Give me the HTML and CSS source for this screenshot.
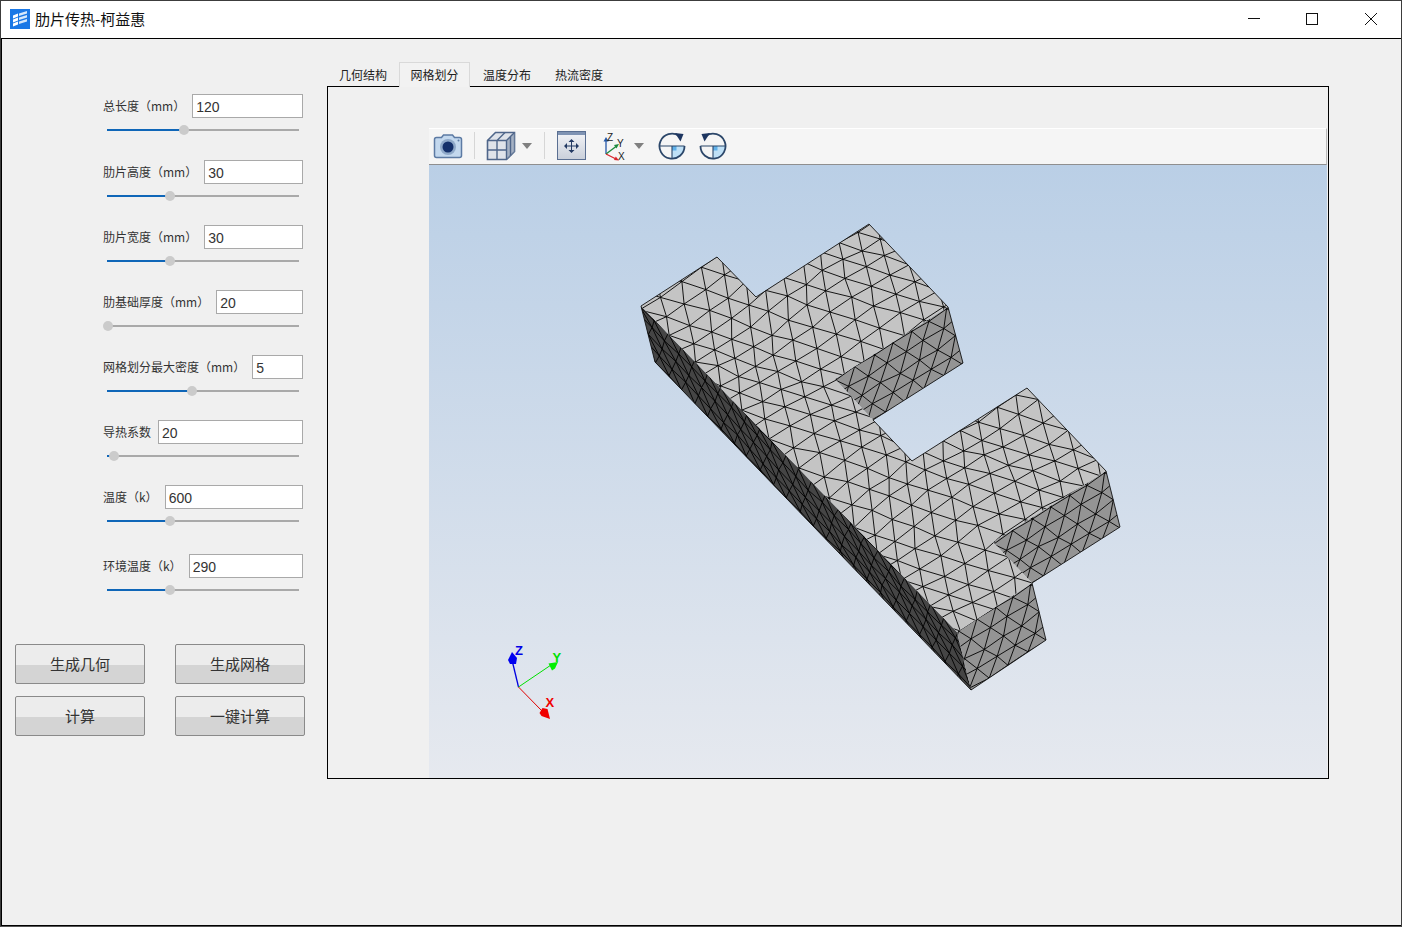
FILE: index.html
```html
<!DOCTYPE html>
<html lang="zh">
<head>
<meta charset="utf-8">
<title>肋片传热-柯益惠</title>
<link rel="stylesheet" href="styles.css">
</head>
<body>
<div class="window">
  <header class="titlebar">
    <svg class="app-icon" viewBox="0 0 20 20">
      <rect width="20" height="20" fill="#1a78e6"/>
      <path d="M3 6.500l5-2v3l-5 2zM3 10.500l5-2v3l-5 2zM3 14.500l5-2v3l-5 2z" fill="#fff"/>
      <path d="M9 4.500l8-2.500v2.500l-8 2.500zM9 8.500l8-2.500v2.500l-8 2.500zM9 12.500l8-2.500v2.500l-8 2.500z" fill="#d6e8fb"/>
    </svg>
    <span class="app-title">肋片传热-柯益惠</span>
    <div class="win-buttons">
      <button class="win-btn" aria-label="最小化"><svg viewBox="0 0 14 14" width="14" height="14"><path d="M1 6.500h12" stroke="#111" fill="none"/></svg></button>
      <button class="win-btn" aria-label="最大化"><svg viewBox="0 0 14 14" width="14" height="14"><rect x="1.500" y="1.500" width="11" height="11" stroke="#111" fill="none"/></svg></button>
      <button class="win-btn" aria-label="关闭"><svg viewBox="0 0 14 14" width="14" height="14"><path d="M1 1l12 12M13 1L1 13" stroke="#111" fill="none"/></svg></button>
    </div>
  </header>

  <main class="content">
    <aside class="controls">
      <form class="form">
        <div class="field field-first">
          <div class="row"><label>总长度（mm）</label><input value="120"></div>
          <div class="slider"><span class="fill" style="width:40%"></span></div>
        </div>
        <div class="field">
          <div class="row"><label>肋片高度（mm）</label><input value="30"></div>
          <div class="slider"><span class="fill" style="width:33%"></span></div>
        </div>
        <div class="field">
          <div class="row"><label>肋片宽度（mm）</label><input value="30"></div>
          <div class="slider"><span class="fill" style="width:33%"></span></div>
        </div>
        <div class="field">
          <div class="row"><label>肋基础厚度（mm）</label><input value="20"></div>
          <div class="slider"><span class="fill" style="width:0.500%"></span></div>
        </div>
        <div class="field">
          <div class="row"><label>网格划分最大密度（mm）</label><input value="5"></div>
          <div class="slider"><span class="fill" style="width:44.500%"></span></div>
        </div>
        <div class="field">
          <div class="row"><label>导热系数</label><input value="20"></div>
          <div class="slider"><span class="fill" style="width:3.600%"></span></div>
        </div>
        <div class="field field-wide">
          <div class="row"><label>温度（k）</label><input value="600"></div>
          <div class="slider"><span class="fill" style="width:33%"></span></div>
        </div>
        <div class="field field-last">
          <div class="row"><label>环境温度（k）</label><input value="290"></div>
          <div class="slider"><span class="fill" style="width:33%"></span></div>
        </div>
      </form>
      <div class="actions">
        <button class="action">生成几何</button>
        <button class="action">生成网格</button>
        <button class="action">计算</button>
        <button class="action">一键计算</button>
      </div>
    </aside>

    <section class="workspace">
      <nav class="tabs">
        <span class="tab">几何结构</span>
        <span class="tab tab-active">网格划分</span>
        <span class="tab">温度分布</span>
        <span class="tab">热流密度</span>
      </nav>
      <div class="panel">
        <div class="viewer">
          <div class="toolbar">
            <svg class="ti ti-camera" viewBox="0 0 30 26" width="30" height="26">
              <path d="M1.500 6.500q0-2 2-2h5l2-2.500h9l2 2.500h5q2 0 2 2v16q0 2-2 2h-23q-2 0-2-2z" fill="#c3d8ee" stroke="#5c7aa3" stroke-width="1.500"/>
              <circle cx="15" cy="14" r="8" fill="#8fa9c9"/>
              <circle cx="15" cy="14" r="5.500" fill="#14306b"/>
              <circle cx="25.500" cy="7.500" r="1" fill="#5c7aa3"/>
            </svg>
            <span class="sep sep-a"></span>
            <svg class="ti ti-cube" viewBox="0 0 30 30" width="30" height="30">
              <path d="M1.500 9.500l8-8h19v19l-8 8h-19z" fill="#dfe3ea" stroke="#4f668a" stroke-width="1.600"/>
              <path d="M20.500 9.500l8-8v19l-8 8z" fill="#8d9db4" fill-opacity=".7"/>
              <path d="M1.500 9.500h19v19M20.500 9.500l8-8M11 9.500v19M1.500 19h19M11 9.500l8-8M24.500 5.500v19" fill="none" stroke="#4f668a" stroke-width="1.400"/>
            </svg>
            <span class="caret caret-a"></span>
            <span class="sep sep-b"></span>
            <svg class="ti ti-fit" viewBox="0 0 30 30" width="30" height="30">
              <defs><linearGradient id="fitg" x1="0" y1="0" x2="0" y2="1"><stop offset="0" stop-color="#f4f5f8"/><stop offset="1" stop-color="#c9cfda"/></linearGradient></defs>
              <rect x=".500" y=".500" width="28" height="28" fill="url(#fitg)" stroke="#5a6f92"/>
              <rect x="1" y="1" width="27" height="3" fill="#7f93b3"/>
              <path d="M14.500 10v10M9.500 15h10" stroke="#233a63"/>
              <path d="M14.500 8l-3 3h6zM14.500 22l-3-3h6zM7 15l3-3v6zM22 15l-3-3v6z" fill="#233a63"/>
            </svg>
            <svg class="ti ti-axes" viewBox="0 0 26 30" width="26" height="30">
              <path d="M4 23V9" stroke="#2456a8" stroke-width="1.300"/><path d="M4 6l-2.500 4.500h5z" fill="#2456a8"/>
              <path d="M4 23L14 15.500" stroke="#1c8a3c" stroke-width="1.300"/><path d="M17 13l-5 1 2.500 3.500z" fill="#1c8a3c"/>
              <path d="M4 23l10 5" stroke="#d8262c" stroke-width="1.300"/><path d="M17 29.500l-5-.5 1.800-3.500z" fill="#d8262c"/>
              <text x="5" y="9.500" class="axis-text">Z</text>
              <text x="15" y="16" class="axis-text">Y</text>
              <text x="16" y="29" class="axis-text">X</text>
            </svg>
            <span class="caret caret-b"></span>
            <svg class="ti ti-cw" viewBox="0 0 28 28" width="28" height="28">
              <path d="M14 14h12.500A12.500 12.500 0 0 1 14 26.500z" fill="#bfe0f6"/>
              <rect x="14" y="14" width="4.500" height="4.500" fill="#5fb0e8"/>
              <path d="M14 14v12.500M1.500 14h25" stroke="#2b4669" fill="none" stroke-width="1.100"/>
              <path d="M21 3.800A12.500 12.500 0 1 0 26.500 14" fill="none" stroke="#2b4669" stroke-width="1.800"/>
              <path d="M17 1l8.500 1-3 7.500z" fill="#1d3560"/>
            </svg>
            <svg class="ti ti-ccw" viewBox="0 0 28 28" width="28" height="28">
              <path d="M14 14h12.500A12.500 12.500 0 0 1 14 26.500z" fill="#bfe0f6"/>
              <rect x="14" y="14" width="4.500" height="4.500" fill="#5fb0e8"/>
              <path d="M14 14v12.500M1.500 14h25" stroke="#2b4669" fill="none" stroke-width="1.100"/>
              <path d="M7 3.800A12.500 12.500 0 1 1 1.500 14" fill="none" stroke="#2b4669" stroke-width="1.800"/>
              <path d="M11 1l-8.500 1 3 7.500z" fill="#1d3560"/>
            </svg>
          </div>
          <div class="canvas">
            <svg id="scene" class="scene" viewBox="429 165 898 613" width="898" height="613">
              <g class="triad">
                <path d="M518.500 687L512 660" stroke="#0000e0" stroke-width="1.300"/>
                <path d="M512 652l-4 8 2 4h6l1-6z" fill="#0000f0"/>
                <path d="M518.500 687L551 665" stroke="#00e000"/>
                <path d="M558 662l-9.500 1.500 3.500 7 3-2z" fill="#00f000"/>
                <path d="M518.500 687L542 711" stroke="#e00000"/>
                <path d="M550 719l-2.500-10-5-1-3 5 2 3z" fill="#f00000"/>
                <text x="515" y="655" class="t-z">Z</text>
                <text x="552.500" y="662" class="t-y">Y</text>
                <text x="545.500" y="707" class="t-x">X</text>
              </g>
            </svg>
          </div>
        </div>
      </div>
    </section>
  </main>
</div>
<script src="mesh.js"></script>
</body>
</html>
```

FILE: styles.css
```css
* { box-sizing: border-box; }
html, body { margin: 0; padding: 0; }
body {
  width: 1402px;
  height: 927px;
  overflow: hidden;
  font-family: "Noto Sans CJK SC", "Liberation Sans", sans-serif;
  color: #222;
}
.window {
  width: 1402px;
  height: 927px;
  display: flex;
  flex-direction: column;
  border: 1px solid #3c3c3c;
  border-bottom-color: #555;
  background: #fff;
}
.titlebar {
  height: 38px;
  flex: none;
  display: flex;
  align-items: center;
  background: #fff;
  border-bottom: 1px solid #000;
  padding-left: 9px;
  padding-bottom: 1px;
}
.app-icon { width: 20px; height: 20px; flex: none; }
.app-title { margin-left: 5px; font-size: 15px; line-height: 20px; color: #111; }
.win-buttons { margin-left: auto; margin-right: 1px; display: flex; height: 37px; }
.win-btn {
  width: 58px;
  height: 37px;
  padding: 0;
  border: 0;
  background: transparent;
  display: flex;
  align-items: center;
  justify-content: center;
}
.win-btn:last-child { margin-left: 1px; }

.content {
  flex: 1;
  min-height: 0;
  display: flex;
  background: #f0f0f0;
  border: solid #000;
  border-width: 0 0 1px 1px;
}
.controls { width: 325px; flex: none; }
.form { margin: 55px 24px 0 101px; }
.field { margin-bottom: 24px; }
.field-first { margin-bottom: 25px; }
.field-wide { margin-bottom: 28px; }
.field-last { margin-bottom: 0; }
.row { display: flex; align-items: center; gap: 7px; height: 24px; }
.row label { font-size: 12px; white-space: nowrap; color: #333; line-height: 16px; }
.row input {
  flex: 1;
  min-width: 0;
  height: 24px;
  border: 1px solid #a9a9a9;
  background: #fff;
  padding: 1px 3px 0;
  font: 14px "Liberation Sans", sans-serif;
  color: #333;
  outline: 0;
}
.slider {
  position: relative;
  height: 10px;
  margin: 7px 4px 0;
  width: 192px;
  background: linear-gradient(#a9a9a9, #a9a9a9) center / 100% 2px no-repeat;
}
.fill {
  position: relative;
  display: block;
  height: 2px;
  top: 4px;
  background: #0f66b8;
}
.fill::after {
  content: "";
  position: absolute;
  right: -5px;
  top: -4px;
  width: 10px;
  height: 10px;
  border-radius: 50%;
  background: #cbcbcb;
}
.actions {
  margin: 49px 0 0 13px;
  width: 290px;
  display: grid;
  grid-template-columns: 130px 130px;
  column-gap: 30px;
  row-gap: 12px;
}
.action {
  height: 40px;
  padding: 0 0 2px;
  border: 1px solid #8a8a8a;
  border-radius: 2px;
  background: linear-gradient(#ececec 0 52%, #d4d4d4 52% 100%);
  font: 15px "Noto Sans CJK SC", sans-serif;
  color: #333;
}

.workspace { width: 1002px; flex: none; padding-top: 23px; }
.tabs { display: flex; height: 24px; position: relative; z-index: 1; }
.tab {
  width: 72px;
  height: 25px;
  text-align: center;
  font-size: 12px;
  line-height: 25px;
  color: #222;
}
.tab-active {
  width: 71px;
  margin-right: 1px;
  background: #f2f2f2;
  border: 1px solid #d9d9d9;
  border-bottom: 0;
  line-height: 24px;
}
.panel {
  height: 693px;
  border: 1px solid #000;
  padding: 41px 1px 0 101px;
}
.viewer { height: 650px; display: flex; flex-direction: column; }
.toolbar {
  height: 37px;
  flex: none;
  display: flex;
  align-items: center;
  padding-bottom: 2px;
  background: #f5f5f5;
  border-top: 1px solid #fff;
  border-bottom: 1px solid #8f8f8f;
  border-right: 1px solid #bbb;
}
.ti { flex: none; }
.ti-camera { margin-left: 4px; }
.sep { width: 1px; height: 27px; background: #d6d6d6; flex: none; }
.sep-a { margin-left: 11px; }
.ti-cube { margin-left: 11px; }
.caret {
  width: 0;
  height: 0;
  flex: none;
  border: solid transparent;
  border-width: 6px 5.500px 0;
  border-top-color: #808080;
}
.caret-a { margin-left: 6px; }
.sep-b { margin-left: 12px; }
.ti-fit { margin-left: 12px; }
.ti-axes { margin-left: 15px; }
.caret-b { margin-left: 6px; }
.ti-cw { margin-left: 14px; }
.ti-ccw { margin-left: 13px; }
.axis-text { font: 10px "Liberation Sans", sans-serif; fill: #222; }
.canvas {
  flex: 1;
  min-height: 0;
  background: linear-gradient(#bacfe6, #e6e9ef);
}
.scene { display: block; }
.triad text { font: bold 13px "Liberation Sans", sans-serif; }
.t-z { fill: #0000e8; }
.t-y { fill: #00e000; }
.t-x { fill: #f00000; }
.triad path { stroke-linejoin: round; }
```

FILE: mesh.js
```js
// Draws the triangulated surface of the fin model: one staggered lattice per face.
(function () {
  var NS = "http://www.w3.org/2000/svg";
  var svg = document.getElementById("scene");
  var a = [19, -12.3], b = [13.17, 13.58], c = [3.6, 14];
  var clipCount = 0;

  function el(name, attrs, parent) {
    var n = document.createElementNS(NS, name);
    for (var k in attrs) n.setAttribute(k, attrs[k]);
    (parent || svg).appendChild(n);
    return n;
  }
  function pts(list) {
    return list.map(function (p) { return p[0] + "," + p[1]; }).join(" ");
  }
  function noise(i, j) {
    var v = Math.sin(i * 127.1 + j * 311.7) * 43758.5453;
    return v - Math.floor(v);
  }

  // u: row direction, v: across rows, o: origin, warp: amount of low-frequency bend
  function face(poly, fill, o, u, v, rangeI, rangeJ, warp, jit, width) {
    var id = "face" + clipCount++;
    var defs = el("clipPath", { id: id });
    el("polygon", { points: pts(poly) }, defs);
    el("polygon", { points: pts(poly), fill: fill });
    function vertex(i, j) {
      var s = i + (j % 2 !== 0 ? 0.5 : 0);
      var x = o[0] + s * u[0] + j * v[0];
      var y = o[1] + s * u[1] + j * v[1];
      x += warp * Math.sin(j * 0.55 + i * 0.3) + jit * (noise(i, j) - 0.5);
      y += warp * Math.cos(i * 0.7 - j * 0.35) + jit * (noise(j + 9, i + 3) - 0.5);
      return [x.toFixed(1), y.toFixed(1)];
    }
    var d = "";
    function seg(p, q) { d += "M" + p[0] + " " + p[1] + "L" + q[0] + " " + q[1]; }
    for (var j = rangeJ[0]; j <= rangeJ[1]; j++) {
      for (var i = rangeI[0]; i <= rangeI[1]; i++) {
        var p = vertex(i, j);
        seg(p, vertex(i + 1, j));
        var odd = j % 2 !== 0;
        seg(p, vertex(odd ? i : i - 1, j + 1));
        seg(p, vertex(odd ? i + 1 : i, j + 1));
      }
    }
    el("path", { d: d, fill: "none", stroke: "#000", "stroke-width": width, "clip-path": "url(#" + id + ")" });
  }

  var A = [641, 306], B = [717, 257], C = [756, 297], D = [869, 224], E = [948, 307];
  var F1 = [963, 363], H1 = [835, 379], G1 = [873, 420], N = [912, 461], P = [1027, 388], Q = [1106, 471];
  var F2 = [1120, 527], H2 = [993, 542], G2 = [1032, 583], K = [957, 632];
  var F3 = [1046, 640], T = [971, 690], U = [655, 362];

  var triad = svg.firstElementChild;

  // dark long side, shaded fin ends, then the top face over them
  face([A, U, T, K], "#454545", A, b, c, [-2, 26], [-1, 5], 0.8, 1.5, 0.9);
  var back = [-a[0], -a[1]];
  face([E, F1, G1, H1], "#949494", E, back, c, [-2, 8], [-1, 6], 1.5, 3, 0.9);
  face([Q, F2, G2, H2], "#949494", Q, back, c, [-2, 8], [-1, 6], 1.5, 3, 0.9);
  face([G2, F3, T, K], "#949494", G2, back, c, [-2, 8], [-1, 6], 1.5, 3, 0.9);
  face([A, B, C, D, E, H1, G1, N, P, Q, H2, G2, K], "#c4c4c4", A, a, b, [-12, 14], [-1, 25], 3.5, 3, 0.9);

  // thin outline round the silhouette only; faces meet without a drawn edge
  el("polygon", {
    points: pts([A, B, C, D, E, F1, G1, N, P, Q, F2, G2, F3, T, U]),
    fill: "none", stroke: "#111", "stroke-width": 0.9
  });

  svg.appendChild(triad);
})();
```
